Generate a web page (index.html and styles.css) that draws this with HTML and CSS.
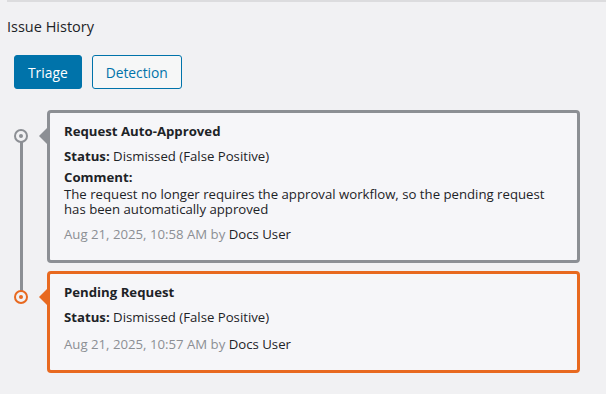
FILE: index.html
```html
<!DOCTYPE html>
<html>
<head>
<meta charset="utf-8">
<link rel="stylesheet" href="styles.css">
</head>
<body>
<div class="panel">
  <h2 class="title">Issue History</h2>
  <div class="tabs">
    <button class="tab tab-active">Triage</button>
    <button class="tab">Detection</button>
  </div>
  <div class="timeline">
    <div class="item item-gray">
      <span class="dot"></span>
      <div class="card">
        <div class="card-title">Request Auto-Approved</div>
        <div class="status"><b>Status:</b> Dismissed (False Positive)</div>
        <div class="comment-label">Comment:</div>
        <div class="comment">The request no longer requires the approval workflow, so the pending request has been automatically approved</div>
        <div class="meta">Aug 21, 2025, 10:58 AM by <span class="user">Docs User</span></div>
      </div>
    </div>
    <div class="item item-orange">
      <span class="dot"></span>
      <div class="card">
        <div class="card-title">Pending Request</div>
        <div class="status"><b>Status:</b> Dismissed (False Positive)</div>
        <div class="meta">Aug 21, 2025, 10:57 AM by <span class="user">Docs User</span></div>
      </div>
    </div>
  </div>
</div>
</body>
</html>
```
FILE: styles.css
```css
html, body {
  margin: 0;
  padding: 0;
  background: #f1f1f3;
}
body {
  font-family: "Open Sans", "Noto Sans", sans-serif;
  color: #1d2327;
  font-size: 13.2px;
}
.panel {
  margin-left: 7px;
  border-top: 2px solid #dcdcde;
  padding-top: 15px;
}
.title {
  margin: 0;
  font-size: 14.5px;
  font-weight: 400;
  line-height: 20px;
}
.tabs {
  display: flex;
  gap: 10px;
  margin: 18px 0 0 7px;
}
.tab {
  font-family: inherit;
  font-size: 13.8px;
  height: 34px;
  padding: 0 13px;
  border: 1px solid #0073aa;
  border-radius: 3px;
  background: #f6f7f7;
  color: #0073aa;
}
.tab-active {
  background: #0073aa;
  color: #fff;
}
.timeline {
  position: relative;
  margin-top: 21px;
  display: flex;
  flex-direction: column;
  gap: 8px;
  width: 573px;
}
.timeline::before {
  content: "";
  position: absolute;
  left: 12.5px;
  top: 30px;
  height: 156px;
  width: 3px;
  background: #8c8f94;
}
.item {
  position: relative;
  padding-left: 40px;
}
.card {
  position: relative;
  border: 3px solid #8c8f94;
  border-radius: 4px;
  background: #f6f6f9;
  padding: 9px 14px 17px 14px;
  display: flex;
  flex-direction: column;
  line-height: 18px;
}
.card::before {
  content: "";
  position: absolute;
  left: -11px;
  top: 15px;
  border-top: 8px solid transparent;
  border-bottom: 8px solid transparent;
  border-right: 8px solid #8c8f94;
}
.dot {
  position: absolute;
  left: 7px;
  top: 19px;
  width: 10px;
  height: 10px;
  border: 2px solid #8c8f94;
  border-radius: 50%;
  background: #f1f1f3;
  z-index: 1;
}
.dot::after {
  content: "";
  position: absolute;
  left: 3px;
  top: 3px;
  width: 4px;
  height: 4px;
  border-radius: 50%;
  background: #8c8f94;
}
.item-orange .card {
  border-color: #e8691f;
}
.item-orange .card::before {
  border-right-color: #e8691f;
}
.item-orange .dot {
  border-color: #e8691f;
}
.item-orange .dot::after {
  background: #e8691f;
}
.card-title {
  font-weight: 700;
  margin-bottom: 7px;
}
.status {
  margin-bottom: 3px;
}
.status b, .comment-label {
  font-weight: 700;
}
.comment {
  line-height: 14.5px;
  margin-top: 1px;
  margin-bottom: 3px;
}
.meta {
  margin-top: 6px;
  color: #8c8f94;
}
.user {
  color: #1d2327;
}
```
